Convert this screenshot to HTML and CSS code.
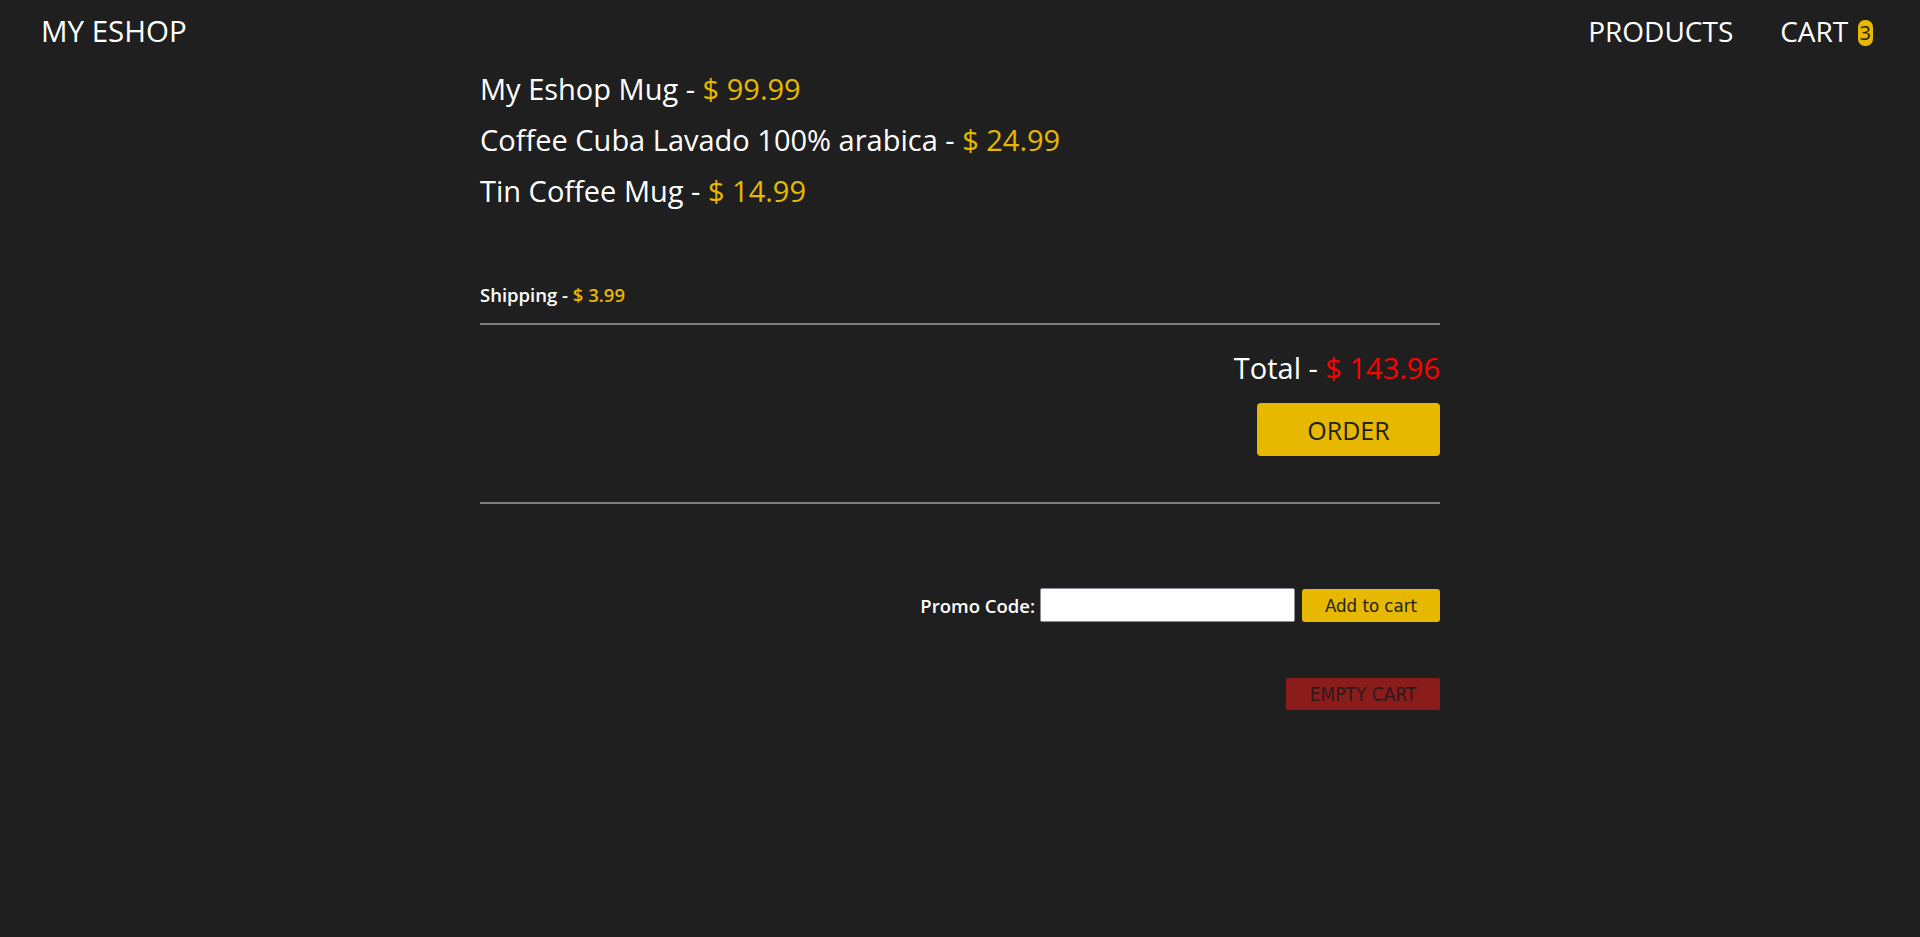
FILE: index.html
```html
<!DOCTYPE html>
<html lang="en">
<head>
<meta charset="utf-8">
<title>My Eshop - Cart</title>
<link rel="stylesheet" href="styles.css">
</head>
<body>
<header class="topbar">
  <a class="brand" href="#">MY ESHOP</a>
  <nav class="nav">
    <a class="nav-link" href="#">PRODUCTS</a>
    <a class="nav-link" href="#">CART <span class="badge">3</span></a>
  </nav>
</header>
<main class="cart">
  <ul class="items">
    <li class="item">My Eshop Mug - <span class="price">$ 99.99</span></li>
    <li class="item">Coffee Cuba Lavado 100% arabica - <span class="price">$ 24.99</span></li>
    <li class="item">Tin Coffee Mug - <span class="price">$ 14.99</span></li>
  </ul>
  <p class="shipping">Shipping - <span class="price">$ 3.99</span></p>
  <hr class="rule">
  <div class="summary">
    <p class="total">Total - <span class="total-price">$ 143.96</span></p>
    <button class="order-btn" type="button">ORDER</button>
  </div>
  <hr class="rule rule-2">
  <form class="promo">
    <label class="promo-label" for="promo">Promo Code:</label>
    <input class="promo-input" id="promo" type="text">
    <button class="add-btn" type="button">Add to cart</button>
  </form>
  <div class="empty-row">
    <button class="empty-btn" type="button">EMPTY CART</button>
  </div>
</main>
</body>
</html>
```
FILE: styles.css
```css
html, body {
  margin: 0;
  padding: 0;
}
body {
  background: #1f1f1f;
  color: #ffffff;
  font-family: "Open Sans", "Noto Sans", sans-serif;
  min-height: 937px;
}
a {
  color: #ffffff;
  text-decoration: none;
}
.topbar {
  display: flex;
  justify-content: space-between;
  align-items: flex-start;
  padding: 12px 47px 0 41px;
  height: 52px;
  box-sizing: border-box;
  font-size: 28px;
  line-height: 38px;
}
.brand {
  font-size: 29.5px;
}
.nav {
  display: flex;
  gap: 47px;
}
.badge {
  display: inline-block;
  background: #e6b800;
  color: #1f1f1f;
  font-size: 20px;
  line-height: 26px;
  padding: 0 2px;
  border-radius: 7px;
  margin-left: 2px;
  vertical-align: 2px;
}
.cart {
  width: 960px;
  margin: 0 auto;
  padding-top: 20px;
}
.items {
  list-style: none;
  margin: 0;
  padding: 0;
}
.item {
  font-size: 29px;
  line-height: 34px;
  margin: 0 0 17px;
}
.price {
  color: #e6b800;
}
.shipping {
  font-size: 18.5px;
  font-weight: 600;
  line-height: 26px;
  margin: 74px 0 0;
}
.rule {
  border: 0;
  border-top: 2px solid #7f7f7f;
  margin: 15px 0 0;
}
.summary {
  display: flex;
  flex-direction: column;
  align-items: flex-end;
}
.total {
  font-size: 29px;
  line-height: 34px;
  margin: 26px 0 0;
}
.total-price {
  color: #ff0000;
}
.order-btn {
  margin-top: 18px;
  width: 183px;
  height: 53px;
  background: #e6b800;
  color: #1f1f1f;
  border: 0;
  border-radius: 4px;
  font-family: "Open Sans", sans-serif;
  font-size: 25px;
}
.rule-2 {
  margin-top: 46px;
}
.promo {
  display: flex;
  justify-content: flex-end;
  align-items: center;
  margin-top: 84px;
}
.promo-label {
  font-size: 18.5px;
  font-weight: 600;
  margin-right: 5px;
}
.promo-input {
  width: 255px;
  height: 34px;
  box-sizing: border-box;
  border: 1px solid #8a8a9a;
  border-radius: 2px;
  background: #ffffff;
  margin: 0 7px 0 0;
  padding: 0 4px;
}
.add-btn {
  width: 138px;
  height: 33px;
  background: #e6b800;
  color: #222222;
  border: 0;
  border-radius: 3px;
  font-family: "DejaVu Sans Condensed", "DejaVu Sans", sans-serif;
  font-stretch: condensed;
  font-size: 18.5px;
}
.empty-row {
  display: flex;
  justify-content: flex-end;
  margin-top: 56px;
}
.empty-btn {
  width: 154px;
  height: 32px;
  background: #8b1c1c;
  color: #2b1a1a;
  border: 0;
  border-radius: 2px;
  font-family: "DejaVu Sans Condensed", "DejaVu Sans", sans-serif;
  font-stretch: condensed;
  font-size: 19px;
}
```
